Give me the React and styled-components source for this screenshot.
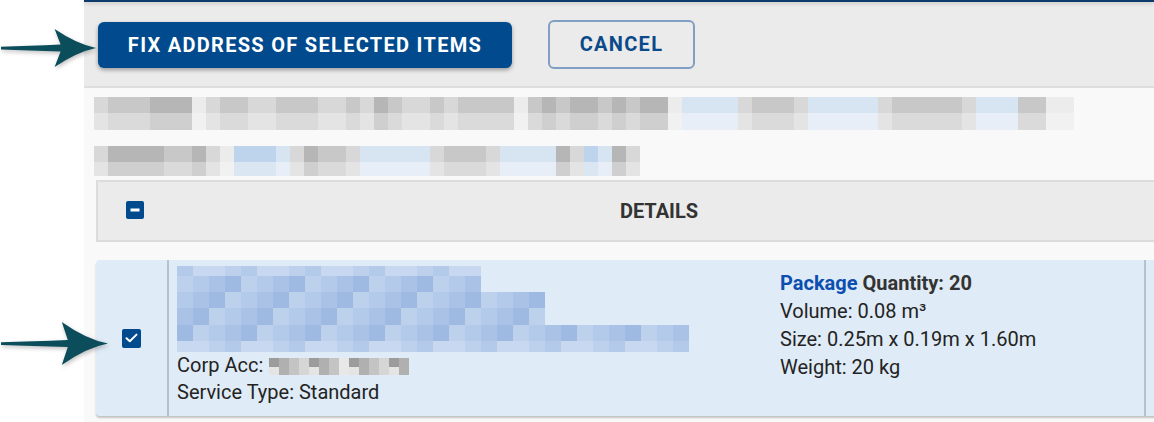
import React from 'react';
import styled, {createGlobalStyle} from 'styled-components';

const GlobalStyle = createGlobalStyle`
  html, body {
    margin: 0;
    padding: 0;
    background: #ffffff;
    overflow: hidden;
  }
  body {
    font-family: Roboto, "Liberation Sans", Arial, sans-serif;
  }
`

const Shell = styled.div`
  position: relative;
  display: flex;
  width: 1154px;
  height: 422px;
  overflow: hidden;
  background: #ffffff;
`

const Gutter = styled.div`
  width: 84px;
  flex-shrink: 0;
  background: #ffffff;
`

const Main = styled.div`
  flex: 1;
  display: flex;
  flex-direction: column;
  background: #f9f9f9;
  min-width: 0;
`

const NavLine = styled.div`
  height: 2px;
  background: #0c3a6b;
  box-shadow: 0 1px 4px rgba(0, 0, 0, 0.25);
  position: relative;
  z-index: 1;
`

const Toolbar = styled.div`
  height: 84px;
  display: flex;
  align-items: center;
  gap: 36px;
  padding-left: 14px;
  background: #ebebeb;
  border-bottom: 2px solid #dedede;
`

const PrimaryButton = styled.button`
  width: 414px;
  height: 46px;
  margin-top: 2px;
  border: none;
  border-radius: 6px;
  background: #004a8d;
  color: #ffffff;
  font-family: Roboto, "Liberation Sans", sans-serif;
  font-size: 20px;
  font-weight: 700;
  letter-spacing: 1.3px;
  box-shadow: 0 2px 4px rgba(0, 0, 0, 0.35);
  cursor: pointer;
`

const OutlineButton = styled.button`
  width: 147px;
  height: 49px;
  border: 2px solid #819fc2;
  border-radius: 6px;
  background: transparent;
  color: #0a4a8a;
  font-family: Roboto, "Liberation Sans", sans-serif;
  font-size: 20px;
  font-weight: 700;
  letter-spacing: 1.3px;
  cursor: pointer;
`

const Content = styled.div`
  display: flex;
  flex-direction: column;
  padding: 9px 0 0 12px;
`

const Blurred = styled.div`
  display: flex;
  flex-direction: column;
  gap: 16px;
  margin-left: -2px;
`

const BlurLine = styled.div`
  display: flex;
  flex-direction: column;
`

const BlurStrip = styled.div`
  display: flex;
  height: ${p => p.$h}px;
`

const Cell = styled.div`
  width: ${p => p.$w}px;
  flex-shrink: 0;
  background: ${p => p.$c};
`

const HeaderRow = styled.div`
  display: flex;
  align-items: stretch;
  height: 58px;
  margin-top: 4px;
  width: 1080px;
  background: #ebebeb;
  border: 2px solid #dcdcdc;
  border-right: none;
`

const CheckCol = styled.div`
  width: 73px;
  flex-shrink: 0;
  display: flex;
  align-items: center;
  justify-content: center;
  padding-left: ${p => p.$shift || 0}px;
  padding-bottom: ${p => p.$lift || 0}px;
  box-sizing: border-box;
  border-right: ${p => p.$divider ? '2px solid #b8c1cb' : 'none'};
`

const HeaderTitle = styled.div`
  width: 976px;
  flex-shrink: 0;
  display: flex;
  align-items: center;
  justify-content: center;
  font-size: 20px;
  font-weight: 700;
  color: #333333;
`

const Box = styled.div`
  width: ${p => p.$size}px;
  height: ${p => p.$size}px;
  border-radius: 2px;
  background: #004a8d;
  display: flex;
  align-items: center;
  justify-content: center;
`

const ItemRow = styled.div`
  display: flex;
  margin-top: 18px;
  width: 1080px;
  height: 156px;
  background: #dfebf6;
  border-radius: 4px 0 0 4px;
  box-shadow: 0 2px 2px rgba(0, 0, 0, 0.22);
`

const DetailsCell = styled.div`
  width: 975px;
  flex-shrink: 0;
  display: flex;
  border-right: 2px solid #b8c1cb;
  font-size: 20px;
  color: #232323;
`

const LeftInfo = styled.div`
  width: 611px;
  flex-shrink: 0;
  display: flex;
  flex-direction: column;
  padding: 6px 0 0 8px;
  box-sizing: border-box;
`

const InfoLine = styled.div`
  display: flex;
  align-items: center;
  height: 27px;
  line-height: 27px;
  white-space: nowrap;
`

const RightInfo = styled.div`
  display: flex;
  flex-direction: column;
  padding-top: 9px;
`

const SpecLine = styled.div`
  height: 28px;
  line-height: 28px;
  white-space: nowrap;
  font-weight: ${p => p.$bold ? 700 : 400};
  color: ${p => p.$bold ? '#333333' : '#232323'};
`

const Accent = styled.span`
  color: #0c4fb0;
`

const Redacted = styled.div`
  display: flex;
  flex-direction: column;
  margin-left: 6px;
  margin-top: 2px;
`

const Arrow = styled.svg`
  position: absolute;
  left: 0;
  top: ${p => p.$top}px;
  filter: drop-shadow(1px 2px 2px rgba(0, 0, 0, 0.25));
`

const tone = {
    G: '#b6b6b6',
    g: '#c8c8c8',
    l: '#d8d8d8',
    w: '#ececec',
    b: '#bdd4ec',
    B: '#d7e5f3',
}

const soft = {
    G: '#cfcfcf',
    g: '#dadada',
    l: '#e4e4e4',
    w: '#f1f1f1',
    b: '#dbe6f3',
    B: '#e7eef7',
}

const lineA = 'lgggGGGwlggllgggllglGgllglggggwgGgGGgGgGGwBBBBlggglBBBBBlggggglBBBggww'
const lineB = 'lGGGGggGlwbbbBlGgglBBBBBlggglBBBBGlbBGl'

const blues = ['#93b1de', '#9fbae2', '#a9c2e6', '#b3caea', '#bdd1ed', '#c7d8f0']

function BlurredText({code, heights}) {
    return (
        <BlurLine>
            {heights.map((h, r) => (
                <BlurStrip key={r} $h={h}>
                    {code.split('').map((ch, i) => (
                        <Cell key={i} $w={14} $c={r === 0 ? tone[ch] : soft[ch]}/>
                    ))}
                </BlurStrip>
            ))}
        </BlurLine>
    )
}

const nameRows = [
    {h: 10, n: 19, light: true},
    {h: 16, n: 19},
    {h: 16, n: 23},
    {h: 17, n: 23},
    {h: 16, n: 32},
    {h: 11, n: 32, light: true},
]

function BlurredName() {
    return (
        <BlurLine>
            {nameRows.map((row, r) => (
                <BlurStrip key={r} $h={row.h}>
                    {Array.from({length: row.n}).map((_, i) => {
                        let idx = 1 + ((i * 7 + r * 3) % 4)
                        if (row.light) idx = Math.min(5, idx + 2)
                        return <Cell key={i} $w={16} $c={blues[idx]}/>
                    })}
                </BlurStrip>
            ))}
        </BlurLine>
    )
}

const grays = ['#9c9c9c', '#b0b0b0', '#c4c4c4', '#d6d6d6', '#e4e4e4']

function BlurredAccount() {
    return (
        <Redacted>
            {[9, 8].map((h, r) => (
                <BlurStrip key={r} $h={h}>
                    {Array.from({length: 14}).map((_, i) => {
                        const idx = Math.min(4, ((i * 29 + r * 11) % 4) + r)
                        return <Cell key={i} $w={10} $c={i === 7 ? '#e8e8e8' : grays[idx]}/>
                    })}
                </BlurStrip>
            ))}
        </Redacted>
    )
}

function CheckIcon() {
    return (
        <svg width="13" height="10" viewBox="0 0 13 10">
            <path d="M1.5 5.2 L4.8 8.3 L11.5 1.6" fill="none" stroke="#ffffff" strokeWidth="2"
                  strokeLinecap="round" strokeLinejoin="round"/>
        </svg>
    )
}

function MinusIcon() {
    return (
        <svg width="10" height="4" viewBox="0 0 10 4">
            <rect x="0.5" y="0.5" width="9" height="3" fill="#ffffff"/>
        </svg>
    )
}

function PointerArrow({top, width, height}) {
    const mid = height / 2
    const base = width * 0.6
    return (
        <Arrow $top={top} width={width} height={height} viewBox={`0 0 ${width} ${height}`}>
            <path
                d={`M1 ${mid - 1.2}
                    Q${base * 0.5} ${mid - 2.2} ${base + 3} ${mid - 3.6}
                    L${base - 3} 1
                    Q${width * 0.8} ${mid - 4} ${width} ${mid}
                    Q${width * 0.8} ${mid + 4} ${base - 3} ${height - 1}
                    L${base + 3} ${mid + 3.6}
                    Q${base * 0.5} ${mid + 2.4} 1 ${mid + 1.4} Z`}
                fill="#0b4d5b"/>
        </Arrow>
    )
}

export default function App() {
    return (
        <Shell>
            <GlobalStyle/>
            <Gutter/>
            <Main>
                <NavLine/>
                <Toolbar>
                    <PrimaryButton>FIX ADDRESS OF SELECTED ITEMS</PrimaryButton>
                    <OutlineButton>CANCEL</OutlineButton>
                </Toolbar>
                <Content>
                    <Blurred>
                        <BlurredText code={lineA} heights={[16, 17]}/>
                        <BlurredText code={lineB} heights={[16, 14]}/>
                    </Blurred>
                    <HeaderRow>
                        <CheckCol $shift={1} $lift={2}>
                            <Box $size={18}><MinusIcon/></Box>
                        </CheckCol>
                        <HeaderTitle>DETAILS</HeaderTitle>
                    </HeaderRow>
                    <ItemRow>
                        <CheckCol $divider>
                            <Box $size={19}><CheckIcon/></Box>
                        </CheckCol>
                        <DetailsCell>
                            <LeftInfo>
                                <BlurredName/>
                                <InfoLine>Corp Acc: <BlurredAccount/></InfoLine>
                                <InfoLine>Service Type: Standard</InfoLine>
                            </LeftInfo>
                            <RightInfo>
                                <SpecLine $bold><Accent>Package</Accent> Quantity: 20</SpecLine>
                                <SpecLine>Volume: 0.08 m³</SpecLine>
                                <SpecLine>Size: 0.25m x 0.19m x 1.60m</SpecLine>
                                <SpecLine>Weight: 20 kg</SpecLine>
                            </RightInfo>
                        </DetailsCell>
                    </ItemRow>
                </Content>
            </Main>
            <PointerArrow top={28} width={96} height={40}/>
            <PointerArrow top={321} width={108} height={45}/>
        </Shell>
    );
}
